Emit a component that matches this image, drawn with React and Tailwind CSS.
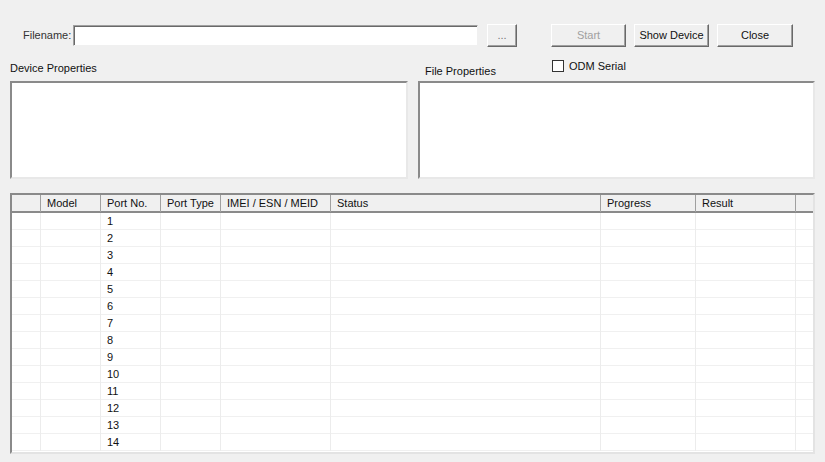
import React from "react";

const font = { fontFamily: '"Liberation Sans", Arial, sans-serif' };

function Btn({ children, className = "", disabled = false }) {
  return (
    <div
      className={
        "h-[23px] flex items-center justify-center text-[11px] bg-[#f0f0f0] border border-t-white border-l-white border-r-[#696969] border-b-[#696969] shadow-[inset_-1px_-1px_0_#a0a0a0] " +
        (disabled ? "text-[#a0a0a0] " : "text-[#111] ") +
        className
      }
    >
      {children}
    </div>
  );
}

const cols = "grid grid-cols-[29px_60px_60px_60px_110px_270px_95px_100px_1fr]";
const headers = ["", "Model", "Port No.", "Port Type", "IMEI / ESN / MEID", "Status", "Progress", "Result", ""];

export default function App() {
  const rows = Array.from({ length: 14 }, (_, i) => i + 1);
  return (
    <div style={font} className="w-[825px] h-[462px] bg-[#f0f0f0] text-[11px] text-[#111] overflow-hidden flex flex-col">
      {/* top row */}
      <div className="flex items-center mt-[24px] h-[23px]">
        <div className="ml-[23px] w-[50px] text-[#333]">Filename:</div>
        <div className="w-[405px] h-[21px] bg-white border border-t-[#a0a0a0] border-l-[#a0a0a0] border-r-[#f0f0f0] border-b-[#f0f0f0] shadow-[inset_1px_1px_0_#696969]" />
        <Btn className="ml-[9px] w-[30px] text-[#777]">...</Btn>
        <Btn className="ml-[34px] w-[75px]" disabled>Start</Btn>
        <Btn className="ml-[8px] w-[75px]">Show Device</Btn>
        <Btn className="ml-[8px] w-[76px]">Close</Btn>
      </div>

      {/* labels row */}
      <div className="flex items-end h-[31px] ml-[10px]">
        <div className="w-[415px] leading-[13px] mb-[3px]">Device Properties</div>
        <div className="w-[127px] leading-[13px] mb-[0px]">File Properties</div>
        <div className="flex items-center mb-[4px]">
          <div className="w-[12px] h-[12px] bg-white border border-[#333]" />
          <span className="ml-[5px]">ODM Serial</span>
        </div>
      </div>

      {/* property boxes */}
      <div className="flex ml-[10px] mt-[3px] gap-[10px]">
        <div className="w-[398px] h-[98px] bg-white border-2 border-t-[#8a8a8a] border-l-[#8a8a8a] border-r-[#e8e8e8] border-b-[#e8e8e8]" />
        <div className="w-[397px] h-[98px] bg-white border-2 border-t-[#8a8a8a] border-l-[#8a8a8a] border-r-[#e8e8e8] border-b-[#e8e8e8]" />
      </div>

      {/* table */}
      <div className="ml-[10px] mt-[14px] w-[805px] h-[261px] bg-white border-2 border-t-[#8a8a8a] border-l-[#8a8a8a] border-r-[#e3e3e3] border-b-[#e3e3e3] flex flex-col overflow-hidden">
        <div className={cols + " h-[18px] shrink-0 bg-[#f0f0f0] border-b-2 border-[#8a8a8a]"}>
          {headers.map((h, i) => (
            <div
              key={i}
              className={
                "flex items-center pl-[6px] whitespace-nowrap " +
                (i < headers.length - 1 ? "border-r border-[#a0a0a0]" : "")
              }
            >
              {h}
            </div>
          ))}
        </div>
        {rows.map((r) => (
          <div key={r} className={cols + " h-[17px] shrink-0 border-b border-[#f0f0f0]"}>
            {headers.map((_, i) => (
              <div
                key={i}
                className={
                  "flex items-center pl-[6px] " +
                  (i < headers.length - 1 ? "border-r border-[#ececec]" : "")
                }
              >
                {i === 2 ? r : ""}
              </div>
            ))}
          </div>
        ))}
      </div>
    </div>
  );
}
